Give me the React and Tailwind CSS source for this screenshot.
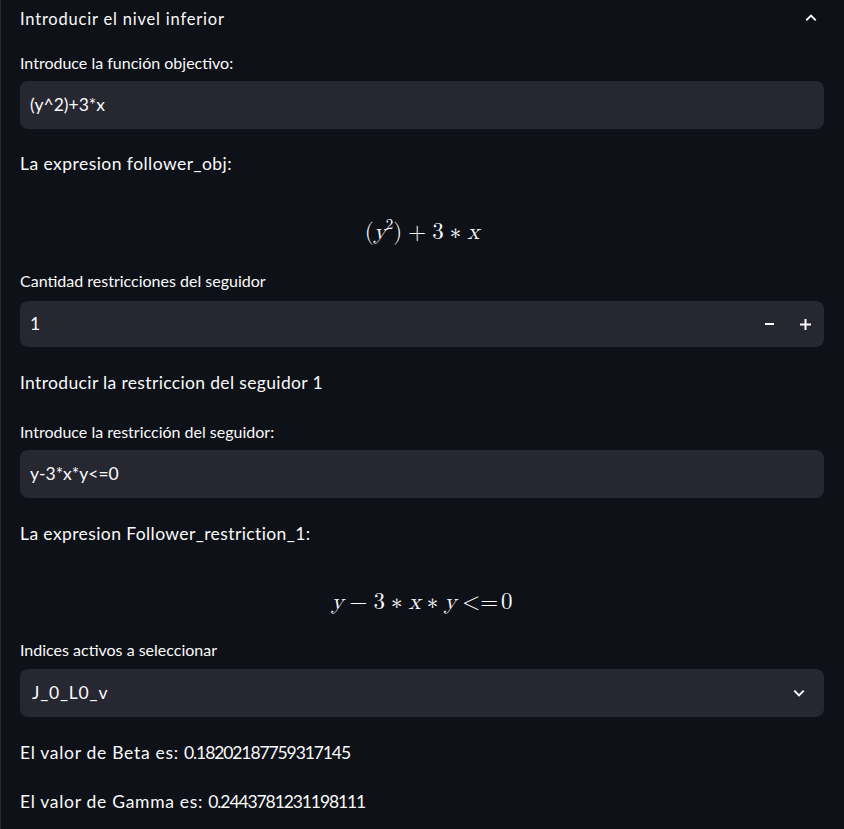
import React from "react";

const sans = { fontFamily: '"Source Sans Pro", Lato, "Noto Sans", sans-serif' };

const ChevronUp = () => (
    <svg width="14" height="14" viewBox="0 0 24 24" fill="none" stroke="#fafafa" strokeWidth="3.2" strokeLinecap="square">
        <path d="M5 15l7-7 7 7" />
    </svg>
);

const ChevronDown = () => (
    <svg width="14" height="14" viewBox="0 0 24 24" fill="none" stroke="#fafafa" strokeWidth="3.2" strokeLinecap="square">
        <path d="M5 9l7 7 7-7" />
    </svg>
);

const Label = ({ children, className }) => (
    <div className={"h-[24px] leading-[24px] text-[16px] text-[#fafafa] " + className}>{children}</div>
);

const Para = ({ children, className }) => (
    <div className={"h-[24px] leading-[24px] text-[17.5px] text-[#fafafa] " + className}>{children}</div>
);

const TextInput = ({ value, className }) => (
    <div className={"h-[48px] rounded-lg bg-[#262730] flex items-center px-[10px] text-[17.5px] text-[#fafafa] " + className}>
        {value}
    </div>
);

const Math = ({ children, className }) => (
    <div
        className={"h-[40px] flex items-center justify-center text-[23px] text-[#fafafa] " + className}
        style={{ fontFamily: '"Latin Modern Math", "DejaVu Serif", "Liberation Serif", serif' }}
    >
        {children}
    </div>
);

export default function App() {
    return (
        <div className="w-[844px] h-[829px] bg-[#0e1117] overflow-hidden" style={sans}>
            <div className="h-full border-l border-[#262a31] pl-[19px] pr-[20px]">
                {/* Expander header */}
                <div className="h-[38px] flex items-center justify-between text-[16.5px] text-[#fafafa]">
                    <span className="tracking-[0.8px]">Introducir el nivel inferior</span>
                    <span className="mr-[6px] mt-[-2px]"><ChevronUp /></span>
                </div>

                <Label className="mt-[13px]">Introduce la función objectivo:</Label>
                <TextInput value="(y^2)+3*x" className="mt-[6px]" />

                <Para className="mt-[23px] tracking-[0.45px]">La expresion follower_obj:</Para>
                <Math className="mt-[36px]">
                    <span>(</span><i>y</i><sup className="text-[15px] not-italic">2</sup><span>)</span>
                    <span className="mx-[6px]">+</span><span>3</span>
                    <span className="mx-[6px]">∗</span><i>x</i>
                </Math>

                <Label className="mt-[17px]">Cantidad restricciones del seguidor</Label>
                <div className="mt-[8px] h-[46px] rounded-lg bg-[#262730] flex items-center pl-[10px] text-[17.5px] text-[#fafafa]">
                    <span className="flex-1">1</span>
                    <div className="w-[38px] h-full flex items-center justify-center">
                        <span className="block w-[9px] h-[2px] bg-[#fafafa]"></span>
                    </div>
                    <div className="w-[34px] h-full flex items-center justify-center mr-[2px]">
                        <svg width="11" height="11" viewBox="0 0 11 11">
                            <rect x="0" y="4.5" width="11" height="2" fill="#fafafa" />
                            <rect x="4.5" y="0" width="2" height="11" fill="#fafafa" />
                        </svg>
                    </div>
                </div>

                <Para className="mt-[24px] tracking-[0.35px]">Introducir la restriccion del seguidor 1</Para>

                <Label className="mt-[25px]">Introduce la restricción del seguidor:</Label>
                <TextInput value="y-3*x*y<=0" className="mt-[6px]" />

                <Para className="mt-[24px] tracking-[0.4px]">La expresion Follower_restriction_1:</Para>
                <Math className="mt-[36px]">
                    <i>y</i><span className="mx-[6px]">−</span><span>3</span>
                    <span className="mx-[6px]">∗</span><i>x</i>
                    <span className="mx-[6px]">∗</span><i>y</i>
                    <span className="ml-[6px]">&lt;=</span><span className="ml-[3px]">0</span>
                </Math>

                <Label className="mt-[16px]">Indices activos a seleccionar</Label>
                <div className="mt-[7px] h-[48px] rounded-lg bg-[#262730] flex items-center justify-between pl-[12px] pr-[18px] text-[17.5px] text-[#fafafa]">
                    <span className="tracking-[0.8px]">J_0_L0_v</span>
                    <ChevronDown />
                </div>

                <Para className="mt-[24px]">
                    <span className="tracking-[0.7px]">El valor de Beta es: </span>
                    <span className="tracking-[-1.1px]">0.18202187759317145</span>
                </Para>
                <Para className="mt-[25px]">
                    <span className="tracking-[0.7px]">El valor de Gamma es: </span>
                    <span className="tracking-[-1.1px]">0.2443781231198111</span>
                </Para>
            </div>
        </div>
    );
}
